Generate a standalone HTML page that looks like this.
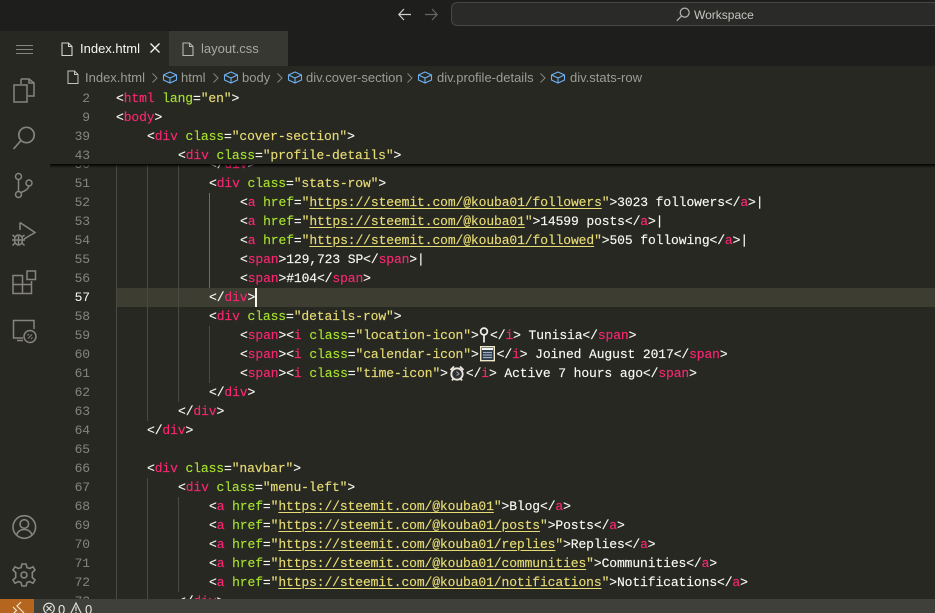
<!DOCTYPE html>
<html lang="en">
<head>
<meta charset="utf-8">
<title>Workspace</title>
<style>
*{box-sizing:border-box}
html,body{margin:0;padding:0;width:935px;height:613px;overflow:hidden;background:#282823}
body{position:relative;font-family:"Liberation Sans",sans-serif}
.abs{position:absolute}
.title{left:0;top:0;width:935px;height:31px;background:#1e1e1c}
.tabbar{left:50px;top:31px;width:885px;height:35px;background:#1e1e1c}
.tab{position:absolute;top:0;height:35px;width:119px;font-size:13px;line-height:36px;white-space:nowrap}
.t1{left:0;background:#282823;color:#f8f8f2}
.t2{left:119px;background:#383833;color:#a8a8a0}
.bc{left:0;top:66px;width:935px;height:22px;color:#9c9c95;font-size:13px;line-height:24px}
.bc span{position:absolute;top:0;white-space:nowrap}
.guide{position:absolute;width:1px;background:#4a4a45}
.ln,.cd{position:absolute;font-family:"Liberation Mono",monospace;font-size:13px;letter-spacing:-.105px;line-height:19px;height:19px;white-space:pre}
.ln{left:50px;width:40px;text-align:right;color:#85857d}
.cd{color:#f8f8f2;-webkit-text-stroke:.15px}
.cd b{font-weight:normal;color:#f92672}
.cd i{font-style:normal;color:#a6e22e}
.cd u{text-decoration:none;color:#e6db74}
.cd u.l{text-decoration:underline;text-decoration-color:#e6db74;text-underline-offset:2px}
.g{display:inline-block;height:16px;vertical-align:-4px}
.sticky{left:50px;top:88px;width:885px;height:76px;background:#282823}
.shadow{left:50px;top:164px;width:885px;height:4px;background:linear-gradient(#000,rgba(0,0,0,.55) 40%,rgba(0,0,0,0))}
.status{left:0;top:599px;width:935px;height:14px;background:#40403a;overflow:hidden}
svg{position:absolute;overflow:visible;fill:none}
</style>
</head>
<body>
<div class="abs title"></div>
<div class="abs tabbar">
 <div class="tab t1"><span style="position:absolute;left:30px">Index.html</span><svg style="left:100px;top:12px" width="10" height="10" stroke="#f0f0ea" stroke-width="1.400"><path d="M.5 .5L9.500 9.500M9.500 .5L.5 9.500"/></svg></div>
 <div class="tab t2"><span style="position:absolute;left:32px">layout.css</span></div>
</div>
<svg style="left:61px;top:42px" width="12" height="15" stroke="#d4d4ce" stroke-width="1.100"><path d="M1 1H7.500L11 4.500V13.500H1ZM7.500 1V4.500H11"/></svg>
<svg style="left:182px;top:42px" width="12" height="15" stroke="#b8b8b0" stroke-width="1.100"><path d="M1 1H7.500L11 4.500V13.500H1ZM7.500 1V4.500H11"/></svg>

<svg style="left:398px;top:8px" width="14" height="13" stroke="#cfcfcf" stroke-width="1.200"><path d="M6 1L.8 6.500L6 12M1 6.500H13"/></svg>
<svg style="left:424px;top:8px" width="14" height="13" stroke="#666" stroke-width="1.200"><path d="M8 1L13.200 6.500L8 12M13 6.500H1"/></svg>
<div class="abs" style="left:451px;top:2px;width:500px;height:24px;border:1px solid #474745;border-radius:6px;background:#2a2a28"></div>
<svg style="left:676px;top:7px" width="14" height="15" stroke="#b5b5b0" stroke-width="1.200"><circle cx="8.700" cy="5.600" r="4.500"/><path d="M5.500 9L.8 13.800"/></svg>
<div class="abs" style="left:694px;top:7px;font-size:12px;line-height:16px;color:#c5c5c0;white-space:nowrap">Workspace</div>

<svg style="left:16px;top:45px" width="17" height="10" stroke="#85857d" stroke-width="1"><path d="M0 .5H17M0 4.500H17M0 8.500H17"/></svg>
<svg style="left:13px;top:78px" width="22" height="25" stroke="#85857d" stroke-width="1.500"><path d="M8 1H16L21 5V18H15M8 1V6M1 7H14V24H1Z"/><path d="M16 1V5H21"/></svg>
<svg style="left:13px;top:125px" width="24" height="26" stroke="#85857d" stroke-width="1.700"><circle cx="13.500" cy="10" r="7.700"/><path d="M8 15.500L.5 24"/></svg>
<svg style="left:14px;top:173px" width="20" height="26" stroke="#85857d" stroke-width="1.500"><circle cx="4.500" cy="3.500" r="3"/><circle cx="4.500" cy="21.500" r="3"/><circle cx="15" cy="10" r="3"/><path d="M4.500 6.500V18.500M7 19.500C11 18 14.500 16 15 13"/></svg>
<svg style="left:12px;top:221px" width="25" height="26" stroke="#85857d" stroke-width="1.500"><path d="M8 1.500L23 11.500L12 18M8 1.500V9"/><ellipse cx="6.500" cy="19" rx="4" ry="5"/><path d="M2.500 19H10.500M6.500 15V24M.5 14L3 16M12.500 14L10 16M0 19H2.500M10.500 19H13M.5 24.500L3 22M12.500 24.500L10 22"/></svg>
<svg style="left:12px;top:270px" width="25" height="25" stroke="#85857d" stroke-width="1.500"><rect x="15" y="1" width="8.500" height="8.500"/><path d="M1 5.500H10.500V23.500H1ZM1 14.500H19.500V23.500H10.500"/><path d="M19.500 14.500V11"/></svg>
<svg style="left:12px;top:319px" width="25" height="25" stroke="#85857d" stroke-width="1.500"><path d="M22 10V1.500H1.500V19H11M5 21.500H11"/><circle cx="18" cy="17.500" r="6"/><path d="M16 19.500L20 15.500M15.500 16.500L17 15M19 20L20.500 18.500" stroke-width="1"/></svg>
<svg style="left:12px;top:515px" width="25" height="25" stroke="#85857d" stroke-width="1.600"><circle cx="12.300" cy="12" r="11.300"/><circle cx="12.300" cy="9" r="4.300"/><path d="M4.500 20C6 15.500 9 14.500 12.300 14.500S18.500 15.500 20 20"/></svg>
<svg style="left:12px;top:563px" width="25" height="25" stroke="#85857d" stroke-width="1.600"><circle cx="12" cy="12" r="3"/><path d="M10 1H14L15 4.500L17.500 5.500L21 3.800L23 7L20.300 9.500V14.500L23 17L21 20.200L17.500 18.500L15 19.500L14 23H10L9 19.500L6.500 18.500L3 20.200L1 17L3.700 14.500V9.500L1 7L3 3.800L6.500 5.500L9 4.500Z"/></svg>

<div class="abs bc">
 <svg style="left:67px;top:4px" width="12" height="15" stroke="#c4c4be" stroke-width="1"><path d="M1 1H7.500L11 4.500V13.500H1ZM7.500 1V4.500H11"/></svg>
 <span style="left:85px">Index.html</span>
 <svg style="left:152px;top:7px" width="6" height="10" stroke="#85857d" stroke-width="1"><path d="M.5 .5L5 5L.5 9.500"/></svg>
 <svg style="left:163px;top:5px" width="14" height="13" stroke="#6cb0f0" stroke-width="1.100"><path d="M7 1L13.500 4V9L7 12L.5 9V4ZM.5 4L7 7L13.500 4M7 7V12"/></svg>
 <span style="left:181px">html</span>
 <svg style="left:213px;top:7px" width="6" height="10" stroke="#85857d" stroke-width="1"><path d="M.5 .5L5 5L.5 9.500"/></svg>
 <svg style="left:224px;top:5px" width="14" height="13" stroke="#6cb0f0" stroke-width="1.100"><path d="M7 1L13.500 4V9L7 12L.5 9V4ZM.5 4L7 7L13.500 4M7 7V12"/></svg>
 <span style="left:242px">body</span>
 <svg style="left:277px;top:7px" width="6" height="10" stroke="#85857d" stroke-width="1"><path d="M.5 .5L5 5L.5 9.500"/></svg>
 <svg style="left:288px;top:5px" width="14" height="13" stroke="#6cb0f0" stroke-width="1.100"><path d="M7 1L13.500 4V9L7 12L.5 9V4ZM.5 4L7 7L13.500 4M7 7V12"/></svg>
 <span style="left:306px">div.cover-section</span>
 <svg style="left:407px;top:7px" width="6" height="10" stroke="#85857d" stroke-width="1"><path d="M.5 .5L5 5L.5 9.500"/></svg>
 <svg style="left:418px;top:5px" width="14" height="13" stroke="#6cb0f0" stroke-width="1.100"><path d="M7 1L13.500 4V9L7 12L.5 9V4ZM.5 4L7 7L13.500 4M7 7V12"/></svg>
 <span style="left:437px">div.profile-details</span>
 <svg style="left:540px;top:7px" width="6" height="10" stroke="#85857d" stroke-width="1"><path d="M.5 .5L5 5L.5 9.500"/></svg>
 <svg style="left:551px;top:5px" width="14" height="13" stroke="#6cb0f0" stroke-width="1.100"><path d="M7 1L13.500 4V9L7 12L.5 9V4ZM.5 4L7 7L13.500 4M7 7V12"/></svg>
 <span style="left:570px">div.stats-row</span>
</div>

<div class="abs" style="left:116px;top:288px;width:819px;height:19px;background:#3e3d32"></div>
<div class="guide" style="left:116px;top:164px;height:435px"></div>
<div class="guide" style="left:147px;top:164px;height:257px"></div>
<div class="guide" style="left:147px;top:478px;height:121px"></div>
<div class="guide" style="left:178px;top:164px;height:238px"></div>
<div class="guide" style="left:178px;top:497px;height:95px"></div>
<div class="guide" style="left:209px;top:193px;height:95px;background:#6e6e68"></div>
<div class="guide" style="left:209px;top:326px;height:57px"></div>

<div class="ln" style="top:155px">50</div><div class="cd" style="left:209px;top:155px">&lt;/<b>div</b>&gt;</div>
<div class="ln" style="top:174px">51</div><div class="cd" style="left:209px;top:174px">&lt;<b>div</b> <i>class</i>=<u>"stats-row"</u>&gt;</div>
<div class="ln" style="top:193px">52</div><div class="cd" style="left:240px;top:193px">&lt;<b>a</b> <i>href</i>=<u>"<u class="l">https://steemit.com/@kouba01/followers</u>"</u>&gt;3023 followers&lt;/<b>a</b>&gt;|</div>
<div class="ln" style="top:212px">53</div><div class="cd" style="left:240px;top:212px">&lt;<b>a</b> <i>href</i>=<u>"<u class="l">https://steemit.com/@kouba01</u>"</u>&gt;14599 posts&lt;/<b>a</b>&gt;|</div>
<div class="ln" style="top:231px">54</div><div class="cd" style="left:240px;top:231px">&lt;<b>a</b> <i>href</i>=<u>"<u class="l">https://steemit.com/@kouba01/followed</u>"</u>&gt;505 following&lt;/<b>a</b>&gt;|</div>
<div class="ln" style="top:250px">55</div><div class="cd" style="left:240px;top:250px">&lt;<b>span</b>&gt;129,723 SP&lt;/<b>span</b>&gt;|</div>
<div class="ln" style="top:269px">56</div><div class="cd" style="left:240px;top:269px">&lt;<b>span</b>&gt;#104&lt;/<b>span</b>&gt;</div>
<div class="ln" style="top:288px;color:#f8f8f2">57</div><div class="cd" style="left:209px;top:288px">&lt;/<b>div</b>&gt;</div>
<div class="abs" style="left:255px;top:288px;width:2px;height:19px;background:#f8f8f0"></div>
<div class="ln" style="top:307px">58</div><div class="cd" style="left:209px;top:307px">&lt;<b>div</b> <i>class</i>=<u>"details-row"</u>&gt;</div>
<div class="ln" style="top:326px">59</div><div class="cd" style="left:240px;top:326px">&lt;<b>span</b>&gt;&lt;<b>i</b> <i>class</i>=<u>"location-icon"</u>&gt;<span class="g" style="width:11.400px"></span>&lt;/<b>i</b>&gt; Tunisia&lt;/<b>span</b>&gt;</div>
<div class="ln" style="top:345px">60</div><div class="cd" style="left:240px;top:345px">&lt;<b>span</b>&gt;&lt;<b>i</b> <i>class</i>=<u>"calendar-icon"</u>&gt;<span class="g" style="width:18px"></span>&lt;/<b>i</b>&gt; Joined August 2017&lt;/<b>span</b>&gt;</div>
<div class="ln" style="top:364px">61</div><div class="cd" style="left:240px;top:364px">&lt;<b>span</b>&gt;&lt;<b>i</b> <i>class</i>=<u>"time-icon"</u>&gt;<span class="g" style="width:18px"></span>&lt;/<b>i</b>&gt; Active 7 hours ago&lt;/<b>span</b>&gt;</div>
<div class="ln" style="top:383px">62</div><div class="cd" style="left:209px;top:383px">&lt;/<b>div</b>&gt;</div>
<div class="ln" style="top:402px">63</div><div class="cd" style="left:178px;top:402px">&lt;/<b>div</b>&gt;</div>
<div class="ln" style="top:421px">64</div><div class="cd" style="left:147px;top:421px">&lt;/<b>div</b>&gt;</div>
<div class="ln" style="top:440px">65</div>
<div class="ln" style="top:459px">66</div><div class="cd" style="left:147px;top:459px">&lt;<b>div</b> <i>class</i>=<u>"navbar"</u>&gt;</div>
<div class="ln" style="top:478px">67</div><div class="cd" style="left:178px;top:478px">&lt;<b>div</b> <i>class</i>=<u>"menu-left"</u>&gt;</div>
<div class="ln" style="top:497px">68</div><div class="cd" style="left:209px;top:497px">&lt;<b>a</b> <i>href</i>=<u>"<u class="l">https://steemit.com/@kouba01</u>"</u>&gt;Blog&lt;/<b>a</b>&gt;</div>
<div class="ln" style="top:516px">69</div><div class="cd" style="left:209px;top:516px">&lt;<b>a</b> <i>href</i>=<u>"<u class="l">https://steemit.com/@kouba01/posts</u>"</u>&gt;Posts&lt;/<b>a</b>&gt;</div>
<div class="ln" style="top:535px">70</div><div class="cd" style="left:209px;top:535px">&lt;<b>a</b> <i>href</i>=<u>"<u class="l">https://steemit.com/@kouba01/replies</u>"</u>&gt;Replies&lt;/<b>a</b>&gt;</div>
<div class="ln" style="top:554px">71</div><div class="cd" style="left:209px;top:554px">&lt;<b>a</b> <i>href</i>=<u>"<u class="l">https://steemit.com/@kouba01/communities</u>"</u>&gt;Communities&lt;/<b>a</b>&gt;</div>
<div class="ln" style="top:573px">72</div><div class="cd" style="left:209px;top:573px">&lt;<b>a</b> <i>href</i>=<u>"<u class="l">https://steemit.com/@kouba01/notifications</u>"</u>&gt;Notifications&lt;/<b>a</b>&gt;</div>
<div class="ln" style="top:592px">73</div><div class="cd" style="left:178px;top:592px">&lt;/<b>div</b>&gt;</div>

<svg style="left:479px;top:327px" width="10" height="17" stroke="#f0f0e8" stroke-width="1.700"><circle cx="5" cy="4.500" r="3.400"/><path d="M5 8V15.500"/></svg>
<svg style="left:480px;top:346px" width="15" height="16"><rect x=".7" y=".7" width="13.600" height="14" fill="#2c3844" stroke="#f0e6c8" stroke-width="1.400"/><rect x="2" y="2" width="11" height="2" fill="#f4f4f4"/><path d="M3 6.500H12M3 9H12M3 11.500H12" stroke="#9cb0c8" stroke-width="1.200"/></svg>
<svg style="left:449px;top:365px" width="16" height="17" stroke="#ece8e0" stroke-width="1.800"><circle cx="8" cy="9" r="5.700" fill="#2e3034"/><path d="M1.500 5L5 1.500M14.500 5L11 1.500M3 15.500L4.500 13.500M13 15.500L11.500 13.500"/><path d="M7.500 6.500L10 9L7.500 10.500" stroke="#a0a8b0" stroke-width="1"/></svg>

<div class="abs sticky"></div>
<div class="abs shadow"></div>
<div class="ln" style="top:89px">2</div><div class="cd" style="left:116px;top:89px">&lt;<b>html</b> <i>lang</i>=<u>"en"</u>&gt;</div>
<div class="ln" style="top:108px">9</div><div class="cd" style="left:116px;top:108px">&lt;<b>body</b>&gt;</div>
<div class="ln" style="top:127px">39</div><div class="cd" style="left:147px;top:127px">&lt;<b>div</b> <i>class</i>=<u>"cover-section"</u>&gt;</div>
<div class="ln" style="top:146px">43</div><div class="cd" style="left:178px;top:146px">&lt;<b>div</b> <i>class</i>=<u>"profile-details"</u>&gt;</div>

<div class="abs status">
 <div class="abs" style="left:0;top:0;width:34px;height:14px;background:#b5651d"></div>
 <svg style="left:12px;top:3px" width="12" height="12" stroke="#f4e8d8" stroke-width="1.200"><path d="M9 0L5 4L9 8M1 5L4.500 8.500L1 12M9 8L12 11"/></svg>
 <svg style="left:43px;top:3px" width="13" height="13" stroke="#e8e8e0" stroke-width="1.100"><circle cx="6" cy="6.500" r="5.300"/><path d="M3.500 4L8.500 9M8.500 4L3.500 9"/></svg>
 <div class="abs" style="left:58px;top:3px;font-size:13px;line-height:16px;color:#e8e8e0">0</div>
 <svg style="left:70px;top:3px" width="13" height="13" stroke="#e8e8e0" stroke-width="1.100"><path d="M6 1L11.500 12H.5ZM6 4.500V9M6 10V11"/></svg>
 <div class="abs" style="left:85px;top:3px;font-size:13px;line-height:16px;color:#e8e8e0">0</div>
</div>
</body>
</html>
